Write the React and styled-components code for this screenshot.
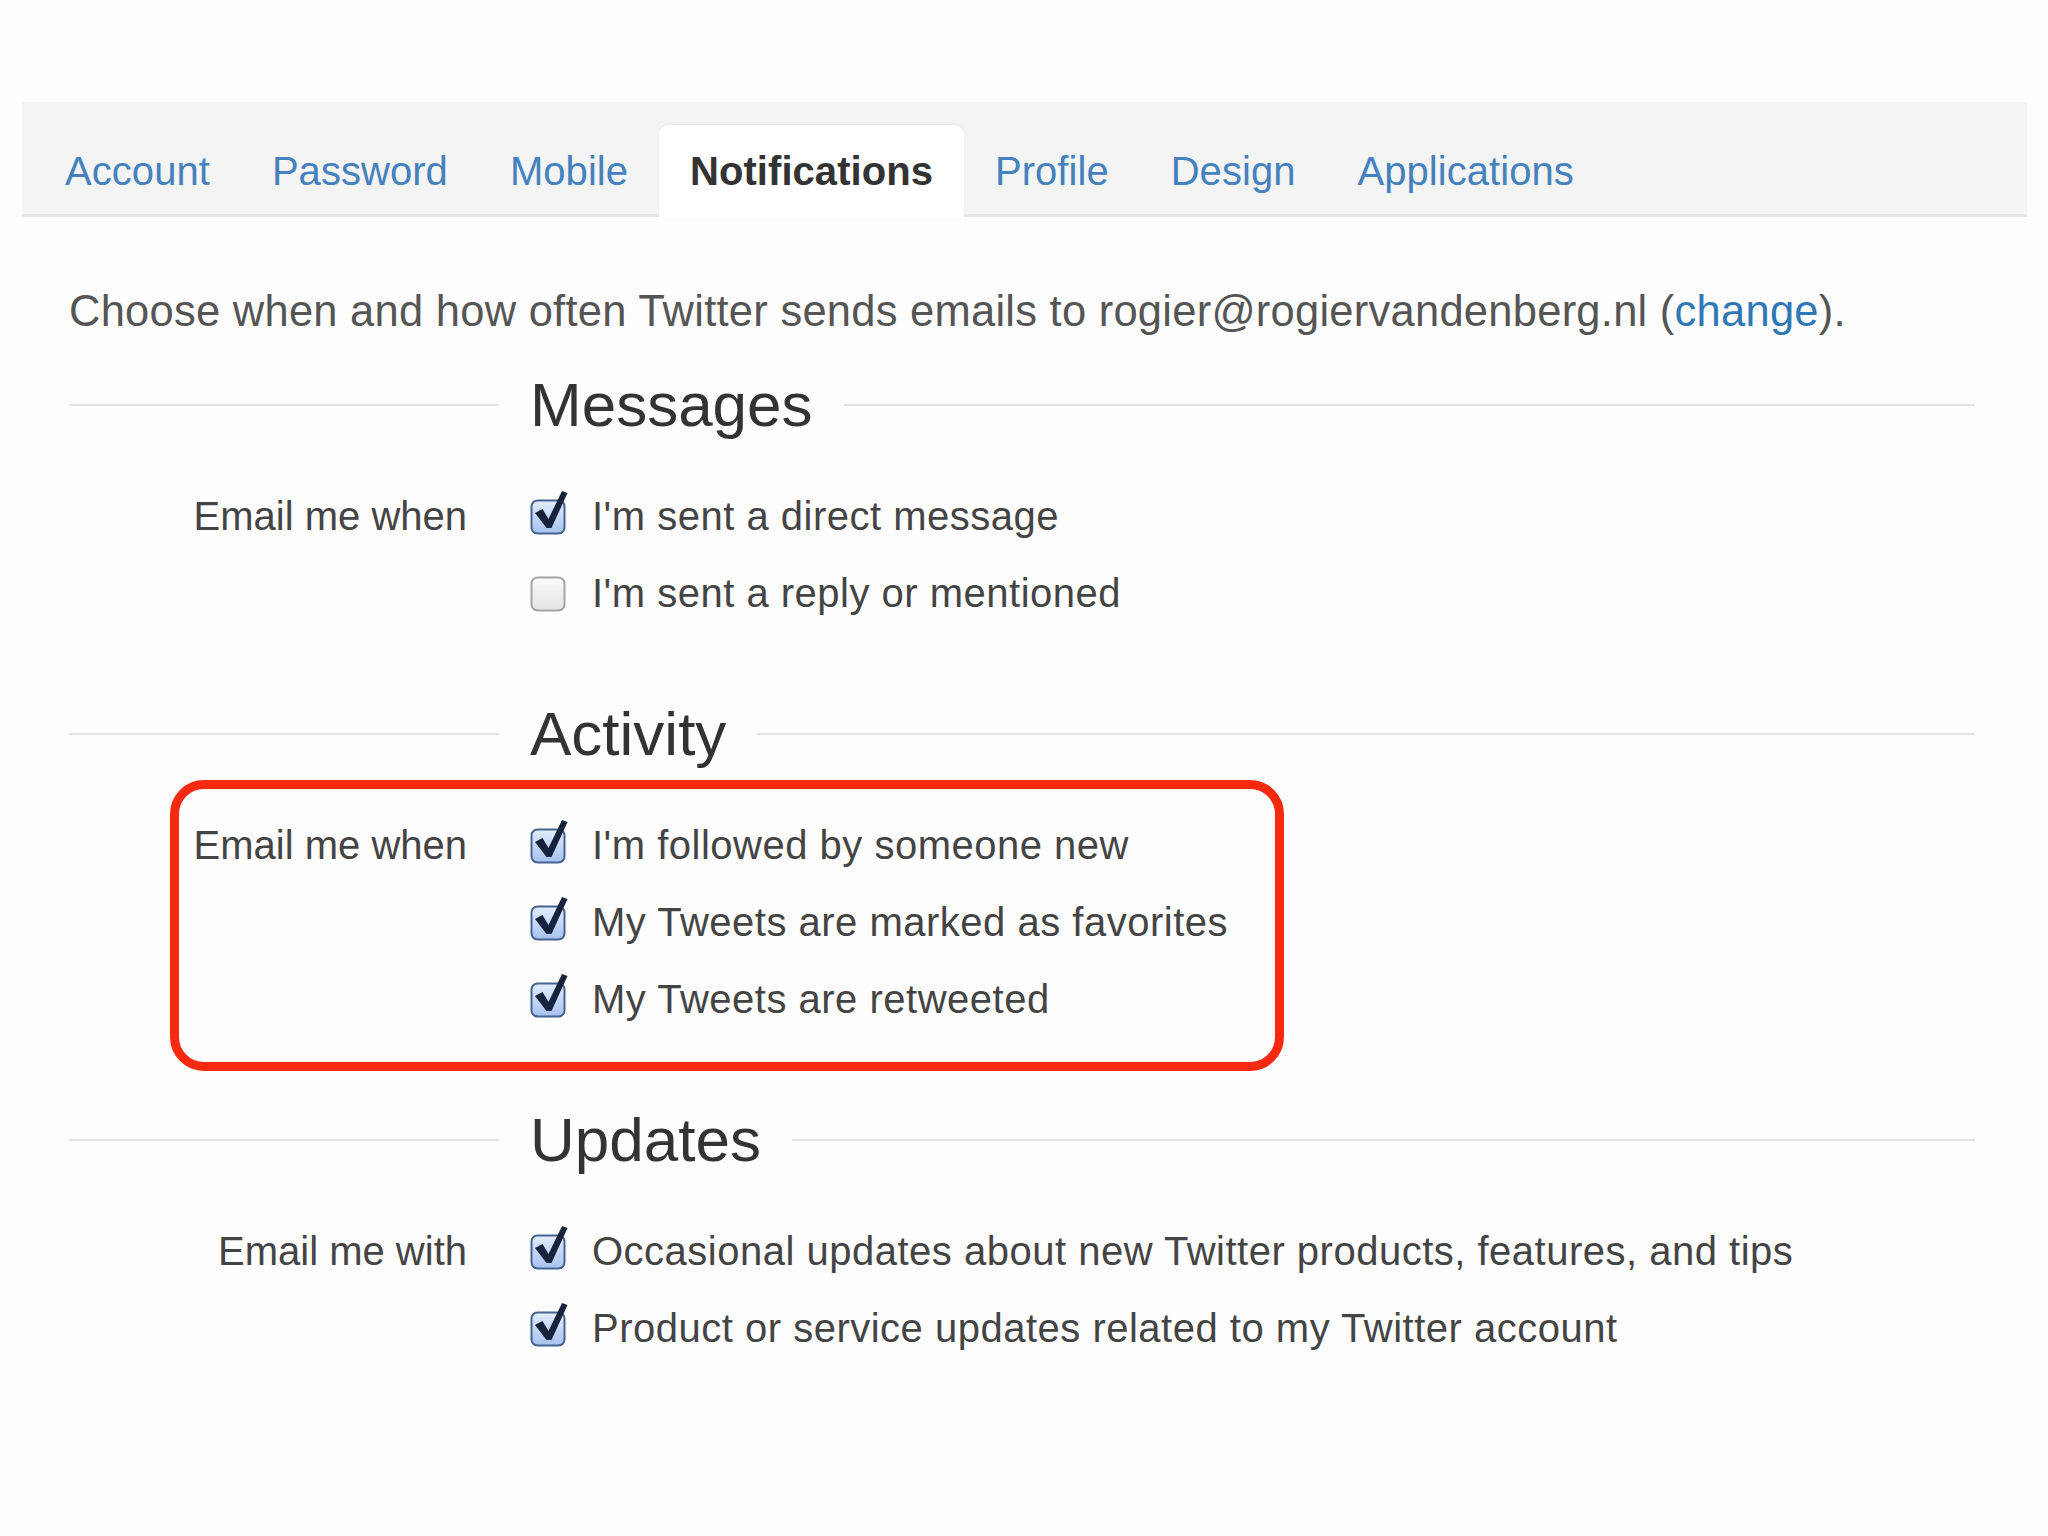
import styled, { createGlobalStyle } from 'styled-components';

const GlobalStyle = createGlobalStyle`
  html, body {
    margin: 0;
    background: #fefdfe;
  }

  body {
    font-family: 'Liberation Sans', Arial, Helvetica, sans-serif;
    color: #444;
  }
`;

const Page = styled.div`
  padding-top: 102px;
  min-height: 1434px;
`;

const TabBar = styled.nav`
  display: flex;
  align-items: flex-end;
  margin: 0 21px 0 22px;
  height: 112px;
  padding-left: 12px;
  background: #f4f4f4;
  border-bottom: 3px solid #e7e7e7;
`;

const Tab = styled.a`
  display: flex;
  align-items: center;
  box-sizing: border-box;
  height: 92px;
  padding: ${(p) => (p.$active ? '0 31px' : '6px 31px 0')};
  margin-bottom: ${(p) => (p.$active ? '-3px' : '0')};
  font-size: 40px;
  letter-spacing: 0.05px;
  font-weight: ${(p) => (p.$active ? 700 : 400)};
  color: ${(p) => (p.$active ? '#333' : '#4581bd')};
  background: ${(p) => (p.$active ? '#fff' : 'transparent')};
  border-radius: 9px 9px 0 0;
  box-shadow: ${(p) => (p.$active ? '0 -1px 2px rgba(0, 0, 0, 0.06)' : 'none')};
  text-decoration: none;
  cursor: pointer;
`;

const Content = styled.main`
  padding: 0 73px 0 69px;
`;

const Intro = styled.p`
  margin: 68px 0 0;
  font-size: 43.5px;
  letter-spacing: 0.25px;
  line-height: 52px;
  color: #555;

  a {
    color: #2f78b5;
    text-decoration: none;
  }
`;

const Section = styled.section`
  margin-top: ${(p) => p.$top}px;
`;

const HeadingRow = styled.div`
  display: grid;
  grid-template-columns: 430px 1fr;
  column-gap: 31px;
  align-items: center;
`;

const Rule = styled.span`
  display: block;
  height: 2px;
  background: #e3e3e6;
  flex: 1;
`;

const HeadingRight = styled.div`
  display: flex;
  align-items: center;
  gap: 31px;
`;

const Heading = styled.h2`
  margin: 0;
  font-size: 62px;
  line-height: 74px;
  font-weight: 400;
  color: #333;
`;

const Group = styled.div`
  position: relative;
  display: grid;
  grid-template-columns: 430px 1fr;
  column-gap: 31px;
  margin-top: 36px;
`;

const Label = styled.div`
  padding-right: 32px;
  text-align: right;
  font-size: 40px;
  line-height: 77px;
  color: #444;
`;

const Options = styled.div`
  display: flex;
  flex-direction: column;
`;

const Option = styled.label`
  display: flex;
  align-items: center;
  gap: 26px;
  height: 77px;
  font-size: 40px;
  letter-spacing: 0.5px;
  color: #444;
`;

const Highlight = styled.div`
  position: absolute;
  left: 101px;
  top: -27px;
  width: 1114px;
  height: 291px;
  box-sizing: border-box;
  border: 9px solid #f72a10;
  border-radius: 34px;
  pointer-events: none;
`;

function Checkbox({ checked }) {
  return (
    <svg width='36' height='36' viewBox='0 0 36 36' style={{ overflow: 'visible', flex: 'none' }}>
      <defs>
        <linearGradient id='cbOn' x1='0' y1='0' x2='0' y2='1'>
          <stop offset='0' stopColor='#e3edfc' />
          <stop offset='1' stopColor='#a6c2f0' />
        </linearGradient>
        <linearGradient id='cbOff' x1='0' y1='0' x2='0' y2='1'>
          <stop offset='0' stopColor='#fbfbfb' />
          <stop offset='1' stopColor='#e4e4e4' />
        </linearGradient>
      </defs>
      <rect
        x='1.5'
        y='1.5'
        width='33'
        height='33'
        rx='6'
        fill={checked ? 'url(#cbOn)' : 'url(#cbOff)'}
        stroke={checked ? '#45638f' : '#a4a4a4'}
        strokeWidth='2'
      />
      {checked && <path d='M5 14 L12.5 10 L18.5 20 L32 -8 L37.5 -6 L21.5 29 L16.5 29 Z' fill='#17233c' />}
    </svg>
  );
}

const sections = [
  {
    title: 'Messages',
    top: 31,
    label: 'Email me when',
    options: [
      { text: "I'm sent a direct message", checked: true },
      { text: "I'm sent a reply or mentioned", checked: false },
    ],
  },
  {
    title: 'Activity',
    top: 65,
    label: 'Email me when',
    highlighted: true,
    options: [
      { text: "I'm followed by someone new", checked: true },
      { text: 'My Tweets are marked as favorites', checked: true },
      { text: 'My Tweets are retweeted', checked: true },
    ],
  },
  {
    title: 'Updates',
    top: 65,
    label: 'Email me with',
    options: [
      { text: 'Occasional updates about new Twitter products, features, and tips', checked: true },
      { text: 'Product or service updates related to my Twitter account', checked: true },
    ],
  },
];

const tabs = ['Account', 'Password', 'Mobile', 'Notifications', 'Profile', 'Design', 'Applications'];

function App() {
  return (
    <Page>
      <GlobalStyle />
      <TabBar>
        {tabs.map((t) => (
          <Tab key={t} $active={t === 'Notifications'}>
            {t}
          </Tab>
        ))}
      </TabBar>
      <Content>
        <Intro>
          Choose when and how often Twitter sends emails to rogier@rogiervandenberg.nl (<a href='#'>change</a>).
        </Intro>
        {sections.map((s) => (
          <Section key={s.title} $top={s.top}>
            <HeadingRow>
              <Rule />
              <HeadingRight>
                <Heading>{s.title}</Heading>
                <Rule />
              </HeadingRight>
            </HeadingRow>
            <Group>
              <Label>{s.label}</Label>
              <Options>
                {s.options.map((o) => (
                  <Option key={o.text}>
                    <Checkbox checked={o.checked} />
                    <span>{o.text}</span>
                  </Option>
                ))}
              </Options>
              {s.highlighted && <Highlight />}
            </Group>
          </Section>
        ))}
      </Content>
    </Page>
  );
}

export default App;
